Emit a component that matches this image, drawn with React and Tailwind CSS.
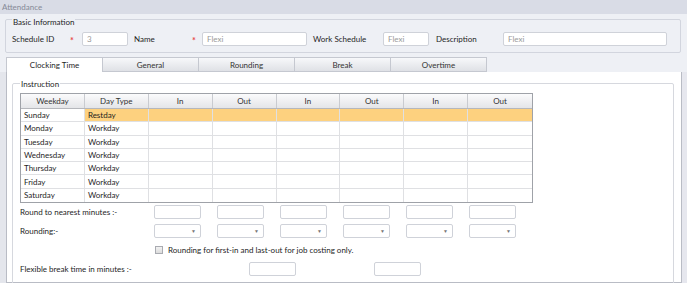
import React from 'react';

const days = [
  ['Sunday', 'Restday'],
  ['Monday', 'Workday'],
  ['Tuesday', 'Workday'],
  ['Wednesday', 'Workday'],
  ['Thursday', 'Workday'],
  ['Friday', 'Workday'],
  ['Saturday', 'Workday'],
];
const heads = ['Weekday', 'Day Type', 'In', 'Out', 'In', 'Out', 'In', 'Out'];
const tabs = ['Clocking Time', 'General', 'Rounding', 'Break', 'Overtime'];

const Box = ({ w = 'w-[47px]', children }) => (
  <div className={`${w} h-[14px] bg-white border border-[#cfd2d9] rounded-[2px] flex items-center px-[4px] text-[#9a9a9a]`}>
    {children}
  </div>
);

const Drop = () => (
  <div className="w-[47px] h-[14px] bg-white border border-[#cfd2d9] rounded-[2px] flex items-center justify-end pr-[4px]">
    <span className="text-[5px] text-[#777] leading-none">▼</span>
  </div>
);

const Star = ({ w }) => <span className={`text-[#e8464a] ${w} text-[9px] font-bold pt-[3px]`}>*</span>;

export default function App() {
  return (
    <div className="w-[687px] h-[283px] overflow-hidden bg-[#eef0f5] text-[#1e1e1e] text-[8px] leading-none" style={{ fontFamily: 'Lato, "Open Sans", sans-serif' }}>
      <div className="h-[14px] bg-[#d9dce6] text-[#868a97] pl-[2px] flex items-center">Attendance</div>

      <fieldset className="mx-[5px] -mt-[2px] w-[676px] h-[41px] border border-[#d2d5de] rounded-[2px] px-[6px]">
        <legend className="px-[1px] pt-[6px]">Basic Information</legend>
        <div className="flex items-center h-[14px] mt-[6px]">
          <span className="w-[58px]">Schedule ID</span>
          <Star w="w-[12px]" />
          <Box w="w-[46px]">3</Box>
          <span className="w-[58px] ml-[6px]">Name</span>
          <Star w="w-[10px]" />
          <Box w="w-[105px]">Flexi</Box>
          <span className="w-[70px] ml-[6px]">Work Schedule</span>
          <Box w="w-[46px]">Flexi</Box>
          <span className="w-[67px] ml-[7px]">Description</span>
          <Box w="w-[164px]">Flexi</Box>
        </div>
      </fieldset>

      <div className="flex ml-[6px] mt-[4px] h-[15px]">
        {tabs.map((t, i) => (
          <div key={t}
            className={i === 0
              ? 'w-[97px] bg-white border border-b-0 border-[#c5c8d0] flex items-center justify-center'
              : 'w-[96px] bg-gradient-to-b from-[#f7f8fa] to-[#dfe1e6] border border-l-0 border-[#c5c8d0] flex items-center justify-center text-[#333]'}>
            {t}
          </div>
        ))}
      </div>

      <div className="flex h-[211px]">
        <div className="w-[6px] bg-[#e4e6ec]" />
        <div className="w-[676px] bg-white border border-t-0 border-[#b9bcc5] px-[5px]">
          <fieldset className="mt-[6px] w-[662px] h-[220px] border border-[#d6d8de] rounded-[2px] px-[7px]">
            <legend className="px-[1px] pt-[2px]">Instruction</legend>
            <div className="mt-[5px] w-[513px] border border-[#9fa2a8]">
              <div className="flex h-[15px] bg-gradient-to-b from-[#fbfbfc] to-[#e4e5e8] border-b border-[#b5b7bc]">
                {heads.map((h, i) => (
                  <div key={i} className={`w-[64px] flex items-center justify-center text-[#333] ${i < 7 ? 'border-r border-[#c9cbd0]' : ''}`}>{h}</div>
                ))}
              </div>
              {days.map(([d, t], r) => (
                <div key={d} className={`flex h-[13.3px] ${r === 0 ? 'bg-[#fdd17f]' : 'bg-white'} ${r < 6 ? 'border-b border-[#dfe0e3]' : ''}`}>
                  <div className={`w-[64px] flex items-center pl-[3px] border-r border-[#dfe0e3] ${r === 0 ? 'bg-white' : ''}`}>{d}</div>
                  <div className="w-[64px] flex items-center pl-[3px] border-r border-[#dfe0e3]">{t}</div>
                  {[0, 1, 2, 3, 4, 5].map(c => (
                    <div key={c} className={`w-[64px] ${c < 5 ? 'border-r border-[#dfe0e3]' : ''}`} />
                  ))}
                </div>
              ))}
            </div>

            <div className="flex items-center h-[14px] mt-[2px]">
              <span className="w-[134px]">Round to nearest minutes :-</span>
              <div className="flex gap-[16px]">
                {[0, 1, 2, 3, 4, 5].map(i => <Box key={i} />)}
              </div>
            </div>
            <div className="flex items-center h-[14px] mt-[5px]">
              <span className="w-[134px]">Rounding:-</span>
              <div className="flex gap-[16px]">
                {[0, 1, 2, 3, 4, 5].map(i => <Drop key={i} />)}
              </div>
            </div>
            <div className="flex items-center h-[9px] mt-[7px] pl-[135px]">
              <div className="w-[8px] h-[8px] border border-[#a9abb1] bg-gradient-to-b from-[#f2f2f2] to-[#dcdcdc]" />
              <span className="ml-[5px]">Rounding for first-in and last-out for job costing only.</span>
            </div>
            <div className="flex items-center h-[14px] mt-[8px]">
              <span className="w-[229px]">Flexible break time in minutes :-</span>
              <Box />
              <div className="w-[78px]" />
              <Box />
            </div>
          </fieldset>
        </div>
        <div className="w-[5px] bg-[#e6e7ee]" />
      </div>
    </div>
  );
}
